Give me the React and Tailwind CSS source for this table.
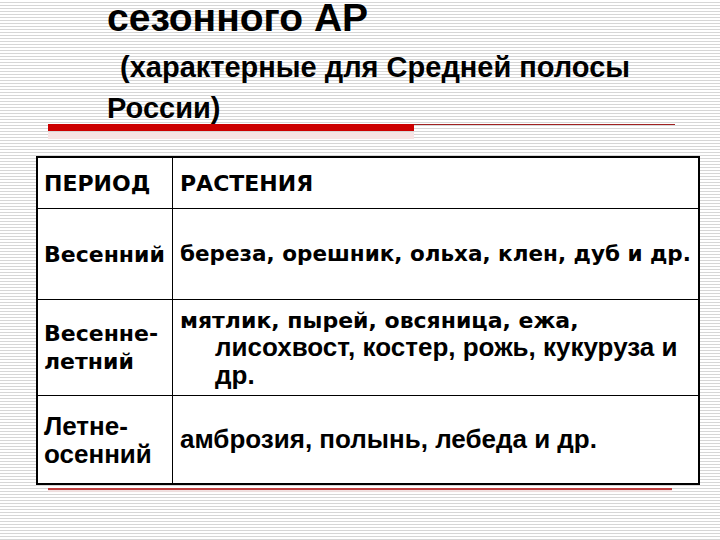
import React from "react";

const verdana = "font-['DejaVu_Sans',sans-serif] font-bold";
const tahoma = "font-['Liberation_Sans',sans-serif] font-bold";

export default function App() {
  return (
    <div className="w-[720px] h-[540px] overflow-hidden bg-[repeating-linear-gradient(to_bottom,#ffffff_0px,#ffffff_2px,#d6d6d6_2px,#d6d6d6_3px)] text-black">
      {/* Title */}
      <div className={`${tahoma} pl-[107px] text-[39px] leading-[36px]`}>
        сезонного АР
      </div>
      <div className={`${tahoma} pl-[120px] mt-[11px] text-[29px] leading-[40px]`}>
        (характерные для Средней полосы
      </div>
      <div className={`${tahoma} pl-[107px] mt-[1px] text-[29px] leading-[40px]`}>
        России)
      </div>

      {/* red rule */}
      <div className="flex items-start pl-[48px] mt-[-4px]">
        <div className="w-[366px] h-[7px] bg-[#cc0000] shadow-[0_8px_0_#f6e4e4]" />
        <div className="w-[261px] h-[1px] bg-[#a02020]" />
      </div>

      {/* Table */}
      <div className="ml-[36px] mt-[25px] w-[664px] border-2 border-black bg-white">
        <div className="flex h-[51px] border-b border-black">
          <div className={`${verdana} w-[135px] border-r border-black pl-[6px] flex items-center text-[22px]`}>
            ПЕРИОД
          </div>
          <div className={`${verdana} flex-1 pl-[7px] flex items-center text-[22px]`}>
            РАСТЕНИЯ
          </div>
        </div>

        <div className="flex h-[91px] border-b border-black">
          <div className={`${verdana} w-[135px] border-r border-black pl-[6px] flex items-center text-[22px]`}>
            Весенний
          </div>
          <div className={`${verdana} flex-1 pl-[7px] flex items-center text-[21.5px]`}>
            береза, орешник, ольха, клен, дуб и др.
          </div>
        </div>

        <div className="flex h-[96px] border-b border-black">
          <div className={`${verdana} w-[135px] border-r border-black pl-[6px] flex flex-col justify-center text-[22px] leading-[28px]`}>
            <span>Весенне-</span>
            <span>летний</span>
          </div>
          <div className="flex-1 pl-[7px] pt-[7px] leading-[28px]">
            <div className={`${verdana} text-[22px]`}>мятлик, пырей, овсяница, ежа,</div>
            <div className={`${tahoma} pl-[35px] text-[26px] mt-[-2px]`}>лисохвост, костер, рожь, кукуруза и</div>
            <div className={`${tahoma} pl-[35px] text-[26px]`}>др.</div>
          </div>
        </div>

        <div className="flex h-[87px]">
          <div className={`${tahoma} w-[135px] border-r border-black pl-[6px] flex flex-col justify-center text-[26px] leading-[28px]`}>
            <span>Летне-</span>
            <span>осенний</span>
          </div>
          <div className={`${tahoma} flex-1 pl-[7px] flex items-center text-[26px]`}>
            амброзия, полынь, лебеда и др.
          </div>
        </div>
      </div>

      {/* bottom rule */}
      <div className="ml-[48px] mt-[3px] w-[624px] h-[2px] bg-[#c04040] shadow-[0_2px_1px_#f0dede]" />
    </div>
  );
}
